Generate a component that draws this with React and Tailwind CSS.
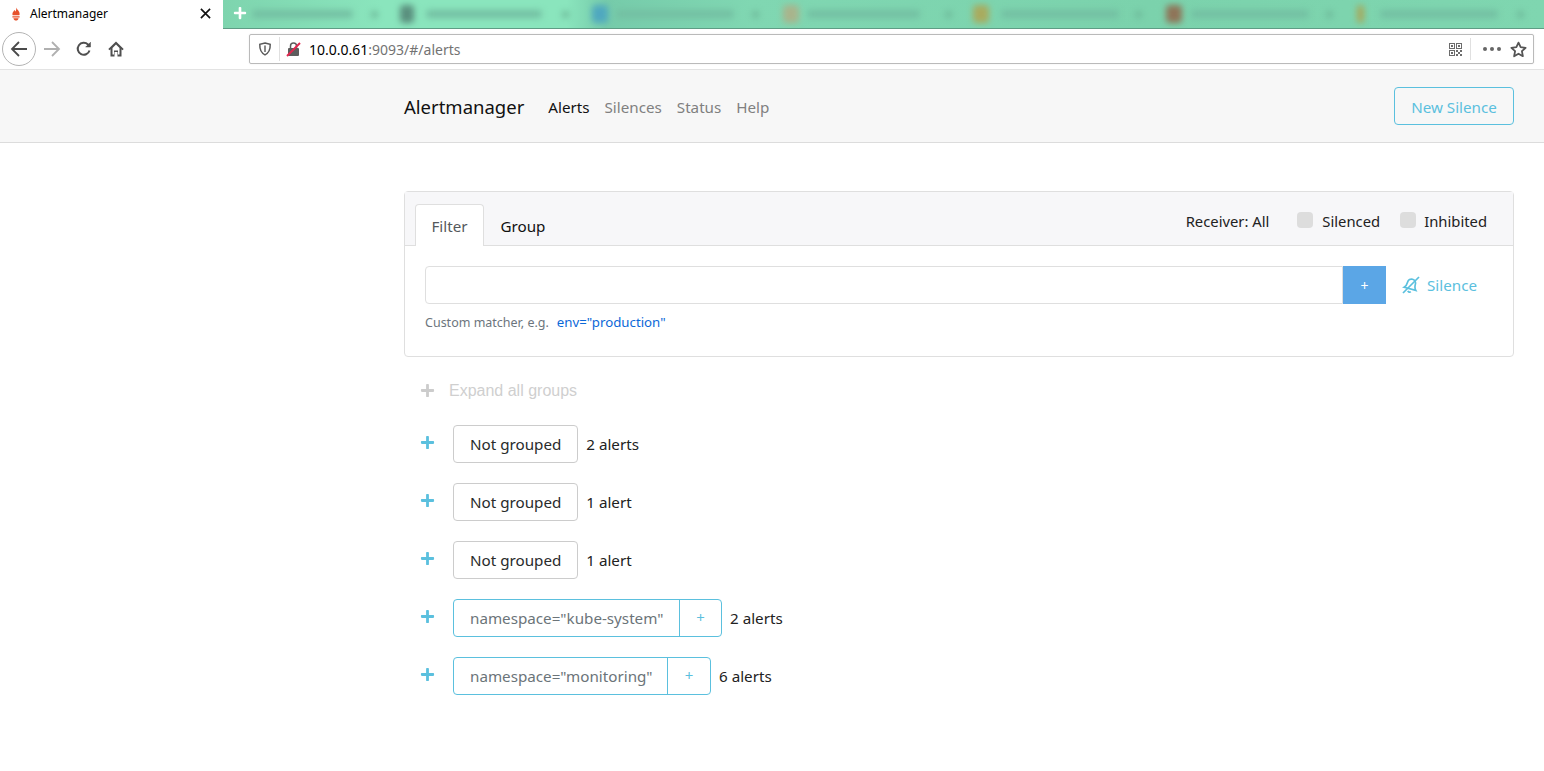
import React from 'react';
import { FaPlus } from 'react-icons/fa';

const sans = { fontFamily: '"Noto Sans", "Open Sans", sans-serif' };

// the other browser tabs are blurred out in the picture
const blurredTabs = [
  { icon: '', textGap: 0, w: 101, dotGap: 18, slot: 148 },
  { icon: 'w-[14px] bg-[#5a8f7e]', textGap: 12, w: 116, dotGap: 20, slot: 192 },
  { icon: 'w-[16px] bg-[#4fa8bf]', textGap: 8, w: 118, dotGap: 18, slot: 191 },
  { icon: 'w-[16px] bg-[#a9b48c]', textGap: 8, w: 113, dotGap: 25, slot: 190 },
  { icon: 'w-[16px] bg-[#a9ab5e]', textGap: 12, w: 118, dotGap: 16, slot: 193 },
  { icon: 'w-[16px] bg-[#8f7458]', textGap: 9, w: 118, dotGap: 17, slot: 191 },
  { icon: 'w-[7px] bg-[#a7a85a]', textGap: 16, w: 118, dotGap: 19, slot: 187 },
];

const TabStrip = () => (
  <div className="flex h-[29px]">
    <div className="flex w-[223px] items-center bg-white pl-[9px] pr-[12px] pb-[2px]">
      <svg width="14" height="14" viewBox="0 0 14 14" className="mr-[7px]">
        <path d="M7 0.5c.6 1.600 3.600 3.200 3.600 6.400 0 .6-.1 1-.3 1.400H3.700c-.2-.4-.3-.8-.3-1.400C3.400 5 5 4.400 5.200 3c.9.5 1.300 1.200 1.300 1.800C7.300 3.600 7.400 2 7 .5z" fill="#e6522c" />
        <path d="M3.400 9.200h7.200v1.400H3.400zM4.400 11.200h5.200c-.3 1.400-1.400 2.300-2.600 2.300s-2.300-.9-2.600-2.300z" fill="#e6522c" />
      </svg>
      <span className="flex-1 text-[12px] text-black" style={sans}>Alertmanager</span>
      <svg width="11" height="11" viewBox="0 0 12 12" stroke="#111" strokeWidth="1.800" fill="none">
        <path d="M1 1l10 10M11 1L1 11" />
      </svg>
    </div>
    <div className="relative flex flex-1 overflow-hidden border-b border-[#5f9c85] bg-[linear-gradient(90deg,#7ed4ae_0%,#8ae5bd_12%,#8ae5bd_26%,#76cbaa_29%,#80d7b2_40%,#7bd2ac_70%,#7fd6b0_100%)]">
      <div className="flex items-center pl-[29px] blur-[3px]">
        {blurredTabs.map((t, i) => (
          <div key={i} className="flex shrink-0 items-center" style={{ width: t.slot }}>
            {t.icon && <div className={`h-[18px] rounded-[4px] ${t.icon}`} />}
            <div className="h-[8px] rounded-full bg-[#73bfa2]" style={{ width: t.w, marginLeft: t.textGap }} />
            <div className="h-[7px] w-[7px] rounded-full bg-[#6db899]" style={{ marginLeft: t.dotGap }} />
          </div>
        ))}
      </div>
      <FaPlus className="absolute left-[10px] top-[6px] text-white" size={14} />
    </div>
  </div>
);

const Toolbar = () => (
  <div className="flex h-[41px] items-center border-b border-[#e3e3e3] bg-white pl-[2px] pr-[10px]">
    <div className="flex h-[34px] w-[34px] items-center justify-center rounded-full border border-[#b4b4b4]">
      <svg width="18" height="18" viewBox="0 0 18 18" fill="none" stroke="#4a4a4a" strokeWidth="1.800">
        <path d="M17 9H2M9 2L2 9l7 7" />
      </svg>
    </div>
    <svg width="18" height="18" viewBox="0 0 18 18" fill="none" stroke="#b0b0b0" strokeWidth="1.800" className="ml-[7px]">
      <path d="M1 9h15M9 2l7 7-7 7" />
    </svg>
    <svg width="16" height="16" viewBox="0 0 16 16" fill="none" stroke="#4f4f4f" strokeWidth="2" className="ml-[15px]">
      <path d="M13.500 9.500A6 6 0 1 1 12 3.500l1.500 1.500" />
      <path d="M14.500 1v5h-5" fill="#4f4f4f" strokeWidth="0.500" />
    </svg>
    <svg width="16" height="16" viewBox="0 0 16 16" fill="#4f4f4f" className="ml-[16px]">
      <path d="M8 0.500L0.300 8l1.200 1.200L2.500 8.300V15.500h4v-4.500h3v4.500h4V8.300l1 .9L15.700 8zM6 9.500V13.500H4.500V7L8 3.500 11.500 7v6.500H10V9.500z" />
    </svg>
    <div className="ml-[125px] flex h-[30px] flex-1 items-center rounded-[2px] border border-[#bababa] bg-white pl-[8px] pr-[5px] shadow-[0_0_2px_rgba(0,0,0,0.08)]">
      <svg width="14" height="14" viewBox="0 0 14 14" fill="none" stroke="#5a5a5a" strokeWidth="1.500">
        <path d="M7 1l5.200 1.400c.2 4.800-1.500 8.600-5.200 10.400C3.300 11 1.600 7.200 1.800 2.400z" />
        <path d="M7 3.500v6.500" strokeWidth="2" stroke="#8a8a8a" />
      </svg>
      <div className="ml-[7px] h-[24px] w-px bg-[#e0e0e0]" />
      <svg width="16" height="16" viewBox="0 0 16 16" className="ml-[6px]">
        <rect x="2" y="7" width="11" height="8" rx="1" fill="#5d5d5d" />
        <path d="M4.500 7V5a3 3 0 0 1 6 0v2" fill="none" stroke="#5d5d5d" strokeWidth="1.500" />
        <path d="M1 15L14 2" stroke="#e22850" strokeWidth="2" />
      </svg>
      <span className="ml-[7px] text-[14px] text-black" style={sans}>
        10.0.0.61<span className="text-[#737373]">:9093/#/alerts</span>
      </span>
      <div className="flex-1" />
      <svg width="15" height="15" viewBox="0 0 15 15" fill="#6b6b6b">
        <path d="M1 1h6v6H1zM2 2v4h4V2zM3 3h2v2H3zM8 1h6v6H8zM9 2v4h4V2zM10 3h2v2h-2zM1 8h6v6H1zM2 9v4h4V9zM3 10h2v2H3zM8 8h2v2H8zM12 8h2v2h-2zM10 10h2v2h-2zM8 12h2v2H8zM12 12h2v2h-2z" fillRule="evenodd" />
      </svg>
      <div className="ml-[7px] h-[22px] w-px bg-[#e0e0e0]" />
      <div className="ml-[12px] flex gap-[3px]">
        <span className="h-[4px] w-[4px] rounded-full bg-[#666]" />
        <span className="h-[4px] w-[4px] rounded-full bg-[#666]" />
        <span className="h-[4px] w-[4px] rounded-full bg-[#666]" />
      </div>
      <svg width="17" height="17" viewBox="0 0 16 16" fill="none" stroke="#555" strokeWidth="1.700" className="ml-[9px] mr-[1px]">
        <path d="M8 1.500l2 4.300 4.700.6-3.500 3.200.9 4.700L8 12l-4.100 2.300.9-4.700L1.300 6.400 6 5.800z" strokeLinejoin="round" />
      </svg>
    </div>
  </div>
);

const Navbar = () => (
  <div className="flex h-[73px] items-center border-b border-[#dcdcdc] bg-[#f7f7f7] pl-[404px] pr-[30px]">
    <span className="relative top-[1px] mr-[24px] text-[18.500px] text-[#111]">Alertmanager</span>
    <nav className="relative top-[1px] flex gap-[15px] text-[15.200px] text-[#808080]">
      <span className="text-[#111]">Alerts</span>
      <span>Silences</span>
      <span>Status</span>
      <span>Help</span>
    </nav>
    <div className="flex-1" />
    <button className="h-[38px] w-[120px] rounded-[4px] border border-[#5bc0de] pt-[3px] text-[15.200px] text-[#5bc0de]">New Silence</button>
  </div>
);

const SilenceIcon = () => (
  <svg width="18" height="18" viewBox="0 0 18 18" fill="none" stroke="#5bc0de" strokeWidth="1.700" className="ml-[16px] shrink-0">
    <g transform="rotate(15 9 9)">
      <path d="M3 13c1.500-1.500 2-3 2-6a4 4 0 0 1 8 0c0 3 .5 4.500 2 6z" />
      <path d="M7.500 15.500a1.800 1.800 0 0 0 3 0" />
    </g>
    <path d="M1 17L17 1" />
  </svg>
);

const FilterCard = () => (
  <div className="rounded-[4px] border border-[#dfdfdf]">
    <div className="flex h-[54px] items-end border-b border-[#dfdfdf] bg-[#f7f7f9] pl-[10px] pr-[26px]">
      <div className="relative top-px flex h-[42px] w-[69px] items-center justify-center rounded-t-[4px] border border-b-0 border-[#dfdfdf] bg-white pt-[1px] text-[#55595c]">Filter</div>
      <div className="flex h-[42px] w-[78px] items-center justify-center pt-[4px] text-[#111]">Group</div>
      <div className="flex-1" />
      <div className="flex h-[54px] items-center pt-[3px] text-[14.800px] text-[#222]">
        <span className="pt-[4px]">Receiver: All</span>
        <span className="ml-[28px] h-[16px] w-[16px] rounded-[4px] bg-[#dddddd]" />
        <span className="ml-[9px] pt-[4px]">Silenced</span>
        <span className="ml-[20px] h-[16px] w-[16px] rounded-[4px] bg-[#dddddd]" />
        <span className="ml-[8px] pt-[4px]">Inhibited</span>
      </div>
    </div>
    <div className="h-[110px] pl-[20px] pr-[36px] pt-[20px]">
      <div className="flex h-[38px] items-center">
        <div className="h-full flex-1 rounded-l-[4px] border border-[#dfdfdf] bg-white" />
        <button className="flex h-full w-[43px] items-center justify-center bg-[#5ba6e6] text-[14px] text-white">+</button>
        <SilenceIcon />
        <span className="ml-[7px] w-[50px] whitespace-nowrap text-[#5bc0de]">Silence</span>
      </div>
      <div className="mt-[8px] flex h-[21px] items-center text-[12.500px] text-[#6c757d]">
        <span className="pt-[2px]">Custom matcher, e.g.</span>
        <span className="ml-[8px] text-[13.250px] text-[#0b68d8]">env="production"</span>
      </div>
    </div>
  </div>
);

const groups = [
  { label: 'Not grouped', count: '2 alerts' },
  { label: 'Not grouped', count: '1 alert' },
  { label: 'Not grouped', count: '1 alert' },
  { label: 'namespace="kube-system"', count: '2 alerts', labelClass: 'w-[226px]', addClass: 'w-[41px]' },
  { label: 'namespace="monitoring"', count: '6 alerts', labelClass: 'w-[214px]', addClass: 'w-[42px]' },
];

const GroupRow = ({ label, count, labelClass, addClass }) => (
  <div className="flex h-[38px] items-center text-[#222]">
    <FaPlus className="relative top-[-1.500px] ml-[15.500px] shrink-0 text-[#5bc0de]" size={15} />
    {labelClass ? (
      <div className="ml-[18.500px] flex h-full rounded-[4px] border border-[#5bc0de] text-[#6b7479]">
        <span className={`flex items-center whitespace-nowrap border-r border-[#5bc0de] pl-[16px] ${labelClass}`}>{label}</span>
        <span className={`flex items-center justify-center pb-[2px] text-[15px] text-[#5bc0de] ${addClass}`}>+</span>
      </div>
    ) : (
      <div className="ml-[18.500px] flex h-full items-center rounded-[4px] border border-[#cccccc] px-[16px] text-[#292b2c]">{label}</div>
    )}
    <span className="ml-[8px]">{count}</span>
  </div>
);

export default function App() {
  return (
    <div className="min-h-[771px] bg-white text-[15.200px]" style={sans}>
      <TabStrip />
      <Toolbar />
      <Navbar />
      <main className="pl-[404px] pr-[30px] pt-[48px]">
        <FilterCard />
        <div className="mt-[22px] flex h-[22px] items-center pt-[1px] text-[#cfcfcf]">
          <FaPlus className="ml-[15.500px] text-[#cccccc]" size={15} />
          <span className="ml-[14.500px] text-[16px]" style={{ fontFamily: '"Liberation Sans", sans-serif' }}>Expand all groups</span>
        </div>
        <div className="mt-[24px] flex flex-col gap-[20px]">
          {groups.map((g, i) => (
            <GroupRow key={i} {...g} />
          ))}
        </div>
      </main>
    </div>
  );
}
